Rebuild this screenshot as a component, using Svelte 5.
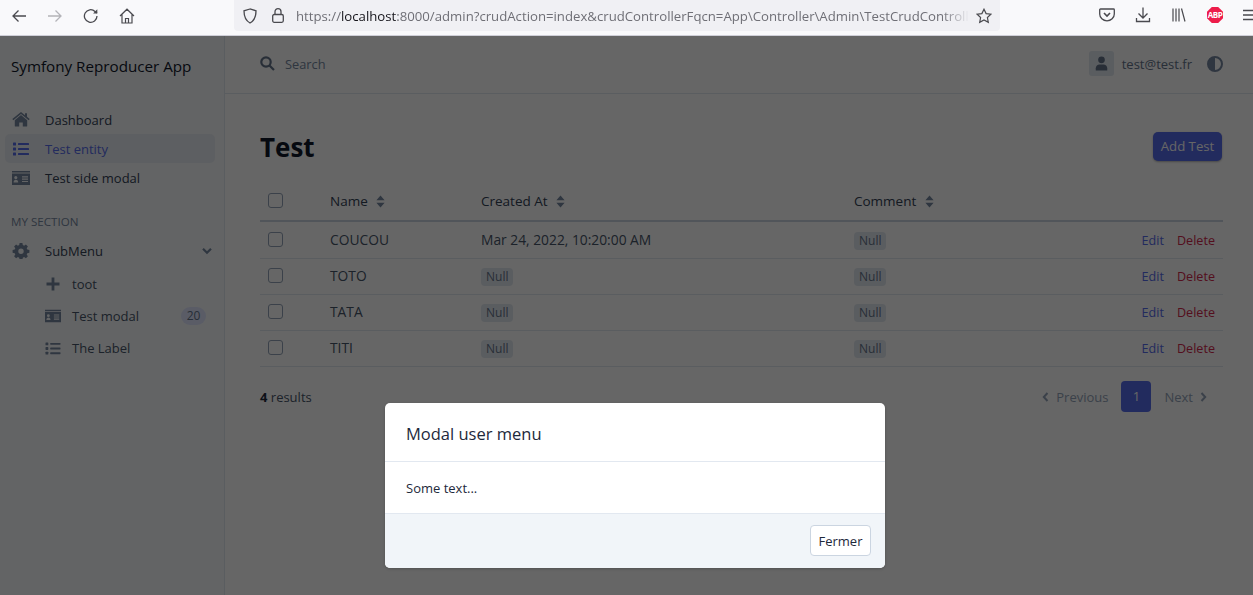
<script>
  const rows = [
    { name: 'COUCOU', created: 'Mar 24, 2022, 10:20:00 AM' },
    { name: 'TOTO', created: null },
    { name: 'TATA', created: null },
    { name: 'TITI', created: null }
  ];
</script>

{#snippet listIcon(size)}
  <svg width={size} height={size} viewBox="0 0 16 16" fill="currentColor">
    <rect x="0" y="1.5" width="3" height="3" rx="0.6" /><rect x="0" y="6.5" width="3" height="3" rx="0.6" /><rect x="0" y="11.5" width="3" height="3" rx="0.6" />
    <rect x="5" y="2" width="11" height="2" rx="0.5" /><rect x="5" y="7" width="11" height="2" rx="0.5" /><rect x="5" y="12" width="11" height="2" rx="0.5" />
  </svg>
{/snippet}

{#snippet cardIcon(size)}
  <svg width={size} height={size} viewBox="0 0 18 16" fill="currentColor">
    <path d="M0 1h18v1.6H0zM0 3.6h18V15H0zM3.8 6a1.6 1.6 0 1 0 0 3.2a1.6 1.6 0 0 0 0-3.2zM1.6 12.6h4.6c.2-1.6-.9-2.8-2.3-2.8s-2.5 1.2-2.3 2.8zM10 6.3v1.2h6V6.3zM10 8.6v1.2h6V8.6zM10 10.9v1.2h6v-1.2z" fill-rule="evenodd" />
  </svg>
{/snippet}

{#snippet sortIcon()}
  <svg class="sort" width="9" height="13" viewBox="0 0 9 13" fill="currentColor">
    <path d="M4.5 0.5L8.6 5.2H.4zM4.5 12.5L.4 7.8h8.2z" />
  </svg>
{/snippet}

<div class="browser">
  <div class="toolbar">
    <div class="nav-buttons">
      <svg width="16" height="16" viewBox="0 0 16 16" fill="none" stroke="#4a4a4f" stroke-width="1.3"><path d="M15 8H2M7.500 2.500L2 8l5.500 5.500" /></svg>
      <svg width="16" height="16" viewBox="0 0 16 16" fill="none" stroke="#b4b4b8" stroke-width="1.3"><path d="M1 8h13M8.500 2.500L14 8l-5.500 5.500" /></svg>
      <svg width="16" height="16" viewBox="0 0 16 16" fill="none" stroke="#4a4a4f" stroke-width="1.3"><path d="M14 8a6.300 6.300 0 1 1-2-4.600L14 5" /><path d="M14.300 1.200v4.200h-4.200" fill="#4a4a4f" stroke="none" /></svg>
      <svg width="16" height="16" viewBox="0 0 16 16" fill="none" stroke="#4a4a4f" stroke-width="1.2"><path d="M1 8L8 1.200 15 8M3 6.500V15h10V6.500M6.500 15v-4.500h3V15" /></svg>
    </div>
    <div class="urlbar">
      <svg width="16" height="16" viewBox="0 0 16 16" fill="none" stroke="#4a4a4f" stroke-width="1.3"><path d="M8 1L2 2.800c0 6 1.500 9.800 6 12.200 4.500-2.400 6-6.200 6-12.200z" /></svg>
      <svg class="lock" width="12" height="15" viewBox="0 0 12 15" fill="none" stroke="#4a4a4f" stroke-width="1.300"><rect x=".7" y="6.500" width="10.600" height="7.800" rx="1.500" /><path d="M3 6.500V3.700a3 3 0 0 1 6 0v2.800" /></svg>
      <span class="url">https://<b>localhost</b>:8000/admin?crudAction=index&amp;crudControllerFqcn=App\Controller\Admin\TestCrudControll</span>
      <svg class="star" width="16" height="16" viewBox="0 0 16 16" fill="none" stroke="#4a4a4f" stroke-width="1.2"><path d="M8 1.200l2.100 4.400 4.800.6-3.500 3.300.9 4.800L8 12l-4.300 2.300.9-4.800L1.100 6.200l4.800-.6z" /></svg>
    </div>
    <div class="extensions">
      <svg width="16" height="16" viewBox="0 0 16 16" fill="none" stroke="#4a4a4f" stroke-width="1.3"><path d="M1.500 2h13a.8.800 0 0 1 .8.800V7a7.300 6.800 0 0 1-14.600 0V2.800a.8.800 0 0 1 .8-.8z" /><path d="M5 6l3 3 3-3" stroke-width="1.600" /></svg>
      <svg width="16" height="16" viewBox="0 0 16 16" fill="none" stroke="#4a4a4f" stroke-width="1.3"><path d="M8 .5v10M3.500 6.500L8 11l4.500-4.500M1.500 11v3.500h13V11" /></svg>
      <svg width="16" height="16" viewBox="0 0 16 16" fill="none" stroke="#4a4a4f" stroke-width="1.2"><path d="M2 1.500v13M5 1.500v13M8 1.500v13M10.500 1.500l3.500 13" /></svg>
      <span class="abp">ABP</span>
      <svg class="menu" width="16" height="16" viewBox="0 0 16 16" fill="none" stroke="#4a4a4f" stroke-width="1.3"><path d="M0 3.500h16M0 8h16M0 12.500h16" /></svg>
    </div>
  </div>

  <div class="page">
    <aside class="sidebar">
      <div class="brand">Symfony Reproducer App</div>
      <nav class="menu-list">
        <a class="item">
          <svg width="18" height="16" viewBox="0 0 18 16" fill="currentColor"><path d="M9 3L2.800 8.200V14a.6.600 0 0 0 .6.600h3.800v-4h3.600v4h3.800a.6.600 0 0 0 .6-.6V8.200zM17.700 7L15 4.800V1.200h-2v2L9 0 .3 7l1 1.200L9 1.900l7.700 6.300z" /></svg>
          Dashboard
        </a>
        <a class="item active">{@render listIcon(16)} Test entity</a>
        <a class="item">{@render cardIcon(18)} Test side modal</a>
        <div class="section">MY SECTION</div>
        <a class="item">
          <svg width="16" height="16" viewBox="0 0 16 16" fill="currentColor"><path fill-rule="evenodd" d="M6.600 0h2.800l.4 2.100 1.300.6 1.800-1.200 2 2-1.200 1.800.6 1.300 2.100.4v2.800l-2.100.4-.6 1.300 1.200 1.800-2 2-1.800-1.200-1.300.6-.4 2.100H6.600l-.4-2.100-1.300-.6-1.800 1.200-2-2 1.200-1.800-.6-1.300L-.4 9.800V7l2.100-.4.6-1.300L1.100 3.500l2-2 1.800 1.200 1.300-.6zM8 5.500a2.700 2.700 0 1 0 0 5.400 2.700 2.700 0 0 0 0-5.400z" /></svg>
          SubMenu
          <svg class="chevron" width="10" height="8" viewBox="0 0 10 8" fill="none" stroke="currentColor" stroke-width="2.200"><path d="M1 1.800l4 4 4-4" /></svg>
        </a>
        <div class="submenu">
          <a class="subitem">
            <svg width="14" height="14" viewBox="0 0 14 14" fill="currentColor"><path d="M5.600 .5h2.800v5.100h5.100v2.800H8.400v5.100H5.600V8.400H.5V5.600h5.100z" /></svg>
            toot
          </a>
          <a class="subitem">{@render cardIcon(16)} Test modal <span class="badge">20</span></a>
          <a class="subitem">{@render listIcon(15)} The Label</a>
        </div>
      </nav>
    </aside>

    <main class="content">
      <header class="topbar">
        <div class="search">
          <svg width="15" height="15" viewBox="0 0 15 15" fill="none" stroke="currentColor" stroke-width="2.200"><circle cx="6" cy="6" r="4.700" /><path d="M9.500 9.500l4.500 4.500" /></svg>
          <span>Search</span>
        </div>
        <div class="user">
          <span class="avatar">
            <svg width="13" height="15" viewBox="0 0 14 16" fill="currentColor"><circle cx="7" cy="4" r="3.600" /><path d="M.8 15.500v-2.300c0-2.600 2-4.200 4-4.200h4.400c2 0 4 1.600 4 4.200v2.300z" /></svg>
          </span>
          <span class="email">test@test.fr</span>
          <svg class="theme" width="16" height="16" viewBox="0 0 16 16"><circle cx="8" cy="8" r="7" fill="none" stroke="currentColor" stroke-width="2" /><path d="M8 1a7 7 0 0 0 0 14z" fill="currentColor" /></svg>
        </div>
      </header>

      <section class="body">
        <div class="title-row">
          <h1>Test</h1>
          <button class="primary">Add Test</button>
        </div>

        <table>
          <colgroup><col class="c-check" /><col class="c-name" /><col class="c-created" /><col class="c-comment" /><col /></colgroup>
          <thead>
            <tr>
              <th><span class="checkbox"></span></th>
              <th>Name {@render sortIcon()}</th>
              <th>Created At {@render sortIcon()}</th>
              <th>Comment {@render sortIcon()}</th>
              <th></th>
            </tr>
          </thead>
          <tbody>
            {#each rows as row}
              <tr>
                <td><span class="checkbox"></span></td>
                <td>{row.name}</td>
                <td>
                  {#if row.created}{row.created}{:else}<span class="null">Null</span>{/if}
                </td>
                <td><span class="null">Null</span></td>
                <td class="actions"><a class="edit">Edit</a><a class="delete">Delete</a></td>
              </tr>
            {/each}
          </tbody>
        </table>

        <div class="list-footer">
          <div class="count"><strong>4</strong> results</div>
          <div class="pagination">
            <span class="page-link">
              <svg width="7" height="10" viewBox="0 0 7 10" fill="none" stroke="currentColor" stroke-width="2"><path d="M5.500 1L1.800 5l3.700 4" /></svg>
              Previous
            </span>
            <span class="page-current">1</span>
            <span class="page-link">
              Next
              <svg width="7" height="10" viewBox="0 0 7 10" fill="none" stroke="currentColor" stroke-width="2"><path d="M1.500 1l3.700 4-3.700 4" /></svg>
            </span>
          </div>
        </div>
      </section>
    </main>
    <div class="backdrop"></div>
    <div class="modal">
      <div class="modal-header">Modal user menu</div>
      <div class="modal-body">Some text...</div>
      <div class="modal-footer"><button class="close">Fermer</button></div>
    </div>
  </div>
</div>

<style>
  :global(body) {
    margin: 0;
    background: #fff;
    font-family: "Open Sans", "Noto Sans", sans-serif;
    overflow: hidden;
  }

  .browser {
    width: 1253px;
    height: 595px;
    display: flex;
    flex-direction: column;
  }

  .toolbar {
    height: 35px;
    flex-shrink: 0;
    display: flex;
    align-items: flex-start;
    background: #f9f9fb;
    border-bottom: 1px solid #cfcfd8;
    overflow: hidden;
  }

  .nav-buttons {
    display: flex;
    gap: 20px;
    padding: 8px 0 0 11px;
    width: 234px;
    flex-shrink: 0;
    box-sizing: border-box;
  }

  .urlbar {
    width: 766px;
    height: 31px;
    flex-shrink: 0;
    box-sizing: border-box;
    background: #f0f0f4;
    border-radius: 0 0 4px 4px;
    display: flex;
    align-items: center;
    padding: 0 8px;
  }

  .lock { margin: 0 12px 0 14px; }

  .url {
    width: 673px;
    flex-shrink: 0;
    font-size: 13.2px;
    color: #6f6f76;
    white-space: nowrap;
    -webkit-mask-image: linear-gradient(to right, #000 96%, transparent);
    mask-image: linear-gradient(to right, #000 96%, transparent);
  }

  .url b { font-weight: 400; color: #15141a; }

  .star { margin-left: 7px; }

  .extensions {
    display: flex;
    align-items: center;
    gap: 20px;
    margin-left: 99px;
    padding-top: 7px;
    flex-shrink: 0;
  }

  .abp {
    width: 16px;
    height: 16px;
    clip-path: polygon(30% 0, 70% 0, 100% 30%, 100% 70%, 70% 100%, 30% 100%, 0 70%, 0 30%);
    background: #ed1c4a;
    color: #fff;
    font-size: 8px;
    font-weight: 700;
    line-height: 16px;
    text-align: center;
    letter-spacing: -.4px;
    white-space: nowrap;
  }

  .page {
    flex: 1;
    display: flex;
    position: relative;
    background: #fff;
    color: #1e293b;
    font-size: 13.5px;
    overflow: hidden;
  }

  .sidebar {
    width: 225px;
    flex-shrink: 0;
    box-sizing: border-box;
    background: #f8fafc;
    border-right: 1px solid #e2e8f0;
    padding: 0 9px 0 5px;
    color: #334155;
    font-size: 13px;
  }

  .brand {
    padding: 19px 0 0 6px;
    height: 60px;
    box-sizing: border-box;
    font-size: 15.2px;
    color: #0f172a;
    line-height: 22px;
  }

  .menu-list {
    display: flex;
    flex-direction: column;
    padding-top: 9px;
  }

  .item {
    height: 29px;
    display: flex;
    align-items: center;
    gap: 15px;
    padding-left: 7px;
    border-radius: 5px;
    color: #334155;
  }

  .item svg:first-child { width: 18px; color: #7587a0; }

  .item.active {
    background: #e9eef4;
    color: #566bea;
  }

  .item.active svg:first-child { color: #566bea; }

  .section {
    margin-top: 20px;
    padding-left: 6px;
    height: 24px;
    line-height: 20px;
    font-size: 11.6px;
    color: #7587a0;
  }

  .chevron {
    margin-left: auto;
    margin-right: 3px;
    color: #7587a0;
  }

  .submenu {
    display: flex;
    flex-direction: column;
    padding-top: 3px;
  }

  .subitem {
    height: 32px;
    display: flex;
    align-items: center;
    gap: 11px;
    padding-left: 40px;
    color: #475569;
  }

  .subitem svg { width: 16px; color: #7587a0; }

  .badge {
    margin-left: auto;
    margin-right: 9px;
    width: 25px;
    height: 18px;
    border-radius: 9px;
    background: #e0e7ff;
    font-size: 12px;
    line-height: 18px;
    text-align: center;
    color: #64748b;
  }

  .content {
    flex: 1;
    min-width: 0;
    display: flex;
    flex-direction: column;
  }

  .topbar {
    height: 58px;
    box-sizing: border-box;
    border-bottom: 1px solid #e2e8f0;
    display: flex;
    align-items: center;
    justify-content: space-between;
    padding: 0 30px 2px 35px;
  }

  .search {
    display: flex;
    align-items: center;
    gap: 10px;
    color: #64748b;
    font-size: 12.8px;
  }

  .search span { color: #7587a0; }

  .user {
    display: flex;
    align-items: center;
    color: #64748b;
  }

  .avatar {
    width: 25px;
    height: 25px;
    border-radius: 3px;
    background: #e2e8f0;
    display: flex;
    align-items: center;
    justify-content: center;
    color: #64748b;
  }

  .email { margin-left: 8px; font-size: 13px; }

  .theme { margin-left: 15px; color: #7587a0; }

  .body { padding: 0 30px 0 35px; }

  .title-row {
    height: 90px;
    display: flex;
    align-items: center;
    justify-content: space-between;
    padding: 14px 1px 0 0;
    box-sizing: border-box;
    margin-bottom: -2px;
  }

  h1 {
    margin: 2px 0 0;
    font-size: 26px;
    font-weight: 700;
    color: #0f172a;
  }

  .primary {
    width: 69px;
    height: 29px;
    padding: 0;
    border: 0;
    border-radius: 5px;
    background: #566bea;
    color: #fff;
    font: inherit;
    font-size: 13.2px;
    box-shadow: 0 1px 2px rgba(0, 0, 0, .3);
  }

  table {
    width: 963px;
    border-collapse: collapse;
    table-layout: fixed;
  }

  .c-check { width: 62px; }
  .c-name { width: 151px; }
  .c-created { width: 373px; }
  .c-comment { width: 250px; }

  th {
    height: 37px;
    padding: 0 8px 1px;
    text-align: left;
    font-weight: 400;
    border-bottom: 2px solid #cbd5e1;
    color: #334155;
  }

  td {
    box-sizing: border-box;
    height: 36px;
    padding: 0 8px 2px;
    border-bottom: 1px solid #e2e8f0;
    color: #475569;
    font-size: 13.8px;
    white-space: nowrap;
  }

  tbody tr:first-child td {
    height: 37px;
    padding-top: 1px;
  }

  .checkbox {
    display: block;
    width: 13px;
    height: 13px;
    border: 1px solid #94a3b8;
    border-radius: 3px;
    background: #fff;
  }

  .sort {
    color: #7587a0;
    margin-left: 5px;
    vertical-align: -2px;
  }

  .null {
    display: inline-block;
    padding: 0 5px;
    height: 18px;
    line-height: 18px;
    border-radius: 4px;
    background: #e2e8f0;
    font-size: 12px;
    color: #64748b;
    vertical-align: -2px;
  }

  td.actions { text-align: right; font-size: 12.6px; padding-bottom: 0; }

  .edit { color: #566bea; margin-right: 13px; }

  .delete { color: #d1274b; }

  .list-footer {
    display: flex;
    align-items: center;
    justify-content: space-between;
    margin-top: 14px;
    height: 32px;
  }

  .count { color: #475569; font-size: 13px; }

  .count strong { color: #1e293b; }

  .pagination {
    display: flex;
    align-items: center;
    padding-right: 16px;
    color: #94a3b8;
    font-size: 13px;
  }

  .page-link {
    display: flex;
    align-items: center;
    gap: 7px;
  }

  .page-current {
    width: 30px;
    height: 31px;
    margin: 0 13px;
    border-radius: 4px;
    background: #566bea;
    color: #fff;
    line-height: 31px;
    text-align: center;
  }

  .backdrop {
    position: absolute;
    inset: 0;
    background: rgba(0, 0, 0, .6);
  }

  .modal {
    position: absolute;
    left: 385px;
    top: 367px;
    width: 500px;
    background: #fff;
    border-radius: 5px;
    overflow: hidden;
    box-shadow: 0 1px 3px rgba(0, 0, 0, .2);
  }

  .modal-header {
    height: 58px;
    line-height: 61px;
    padding: 0 21px;
    font-size: 16.5px;
    color: #1e293b;
    border-bottom: 1px solid #e2e8f0;
  }

  .modal-body {
    height: 51px;
    line-height: 52px;
    padding: 0 21px;
    font-size: 13px;
    color: #1e293b;
  }

  .modal-footer {
    height: 54px;
    border-top: 1px solid #e2e8f0;
    background: #f1f5f9;
    display: flex;
    align-items: flex-start;
    justify-content: flex-end;
    padding: 0 14px;
  }

  .close {
    width: 61px;
    height: 31px;
    margin-top: 11px;
    padding: 0;
    background: #fff;
    border: 1px solid #cbd5e1;
    border-radius: 4px;
    font: inherit;
    font-size: 13px;
    color: #1e293b;
  }
</style>
